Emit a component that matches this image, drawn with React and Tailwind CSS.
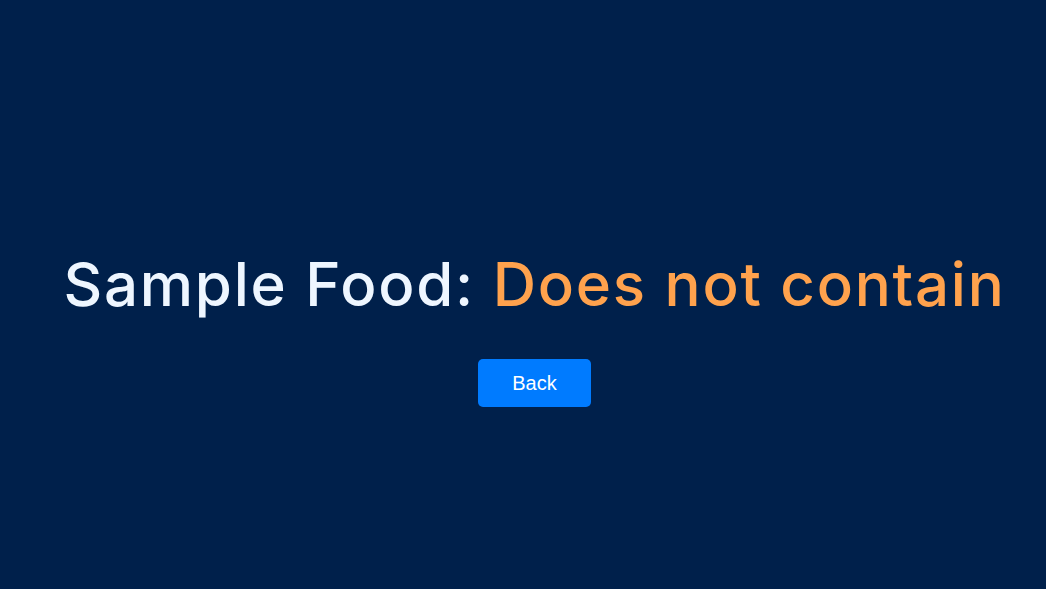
export default function App() {
  return (
    <div className="w-[1046px] h-[589px] bg-[#00204b] flex flex-col items-center justify-center pl-[23px] pt-[66px]">
      <h1
        className="text-[60px] leading-[72px] tracking-[1.75px] font-medium text-[#eef6ff] whitespace-nowrap"
        style={{ fontFamily: "Inter, 'Noto Sans', sans-serif" }}
      >
        Sample Food: <span className="text-[#ffa24d]">Does not contain</span>
      </h1>
      <button
        className="mt-[39px] w-[113px] h-[48px] rounded-[5px] bg-[#007bff] text-white text-[20px]"
        style={{ fontFamily: "'Liberation Sans', Arial, sans-serif" }}
      >
        Back
      </button>
    </div>
  );
}
